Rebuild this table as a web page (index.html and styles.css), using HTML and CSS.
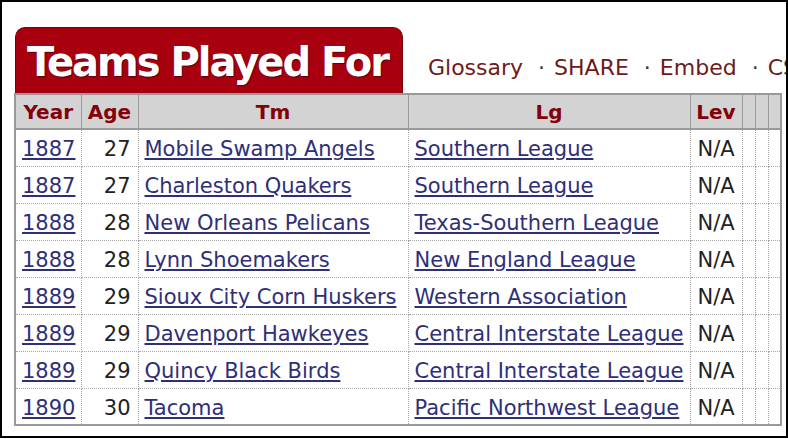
FILE: index.html
```html
<!DOCTYPE html>
<html>
<head>
<meta charset="utf-8">
<link rel="stylesheet" href="styles.css">
</head>
<body>
<div class="frame">
  <div class="content">
    <div class="head">
      <h2 class="tab">Teams Played For</h2>
      <div class="links">
        <span class="lnk">Glossary</span><span class="sep">·</span><span class="lnk">SHARE</span><span class="sep">·</span><span class="lnk">Embed</span><span class="sep">·</span><span class="lnk">CSV</span>
      </div>
    </div>
    <table class="teams">
      <colgroup>
        <col class="c-year"><col class="c-age"><col class="c-tm"><col class="c-lg"><col class="c-lev"><col class="c-x"><col class="c-x"><col class="c-x">
      </colgroup>
      <thead>
        <tr><th>Year</th><th>Age</th><th>Tm</th><th>Lg</th><th>Lev</th><th></th><th></th><th></th></tr>
      </thead>
      <tbody>
        <tr><td class="yr"><a href="#">1887</a></td><td class="age">27</td><td class="tm"><a href="#">Mobile Swamp Angels</a></td><td class="lg"><a href="#">Southern League</a></td><td class="lev">N/A</td><td></td><td></td><td></td></tr>
        <tr><td class="yr"><a href="#">1887</a></td><td class="age">27</td><td class="tm"><a href="#">Charleston Quakers</a></td><td class="lg"><a href="#">Southern League</a></td><td class="lev">N/A</td><td></td><td></td><td></td></tr>
        <tr><td class="yr"><a href="#">1888</a></td><td class="age">28</td><td class="tm"><a href="#">New Orleans Pelicans</a></td><td class="lg"><a href="#">Texas-Southern League</a></td><td class="lev">N/A</td><td></td><td></td><td></td></tr>
        <tr><td class="yr"><a href="#">1888</a></td><td class="age">28</td><td class="tm"><a href="#">Lynn Shoemakers</a></td><td class="lg"><a href="#">New England League</a></td><td class="lev">N/A</td><td></td><td></td><td></td></tr>
        <tr><td class="yr"><a href="#">1889</a></td><td class="age">29</td><td class="tm"><a href="#">Sioux City Corn Huskers</a></td><td class="lg"><a href="#">Western Association</a></td><td class="lev">N/A</td><td></td><td></td><td></td></tr>
        <tr><td class="yr"><a href="#">1889</a></td><td class="age">29</td><td class="tm"><a href="#">Davenport Hawkeyes</a></td><td class="lg"><a href="#">Central Interstate League</a></td><td class="lev">N/A</td><td></td><td></td><td></td></tr>
        <tr><td class="yr"><a href="#">1889</a></td><td class="age">29</td><td class="tm"><a href="#">Quincy Black Birds</a></td><td class="lg"><a href="#">Central Interstate League</a></td><td class="lev">N/A</td><td></td><td></td><td></td></tr>
        <tr><td class="yr"><a href="#">1890</a></td><td class="age">30</td><td class="tm"><a href="#">Tacoma</a></td><td class="lg"><a href="#">Pacific Northwest League</a></td><td class="lev">N/A</td><td></td><td></td><td></td></tr>
      </tbody>
    </table>
  </div>
</div>
</body>
</html>
```

FILE: styles.css
```css
html, body {
  margin: 0;
  padding: 0;
  background: #fff;
}

.frame {
  box-sizing: border-box;
  width: 788px;
  height: 438px;
  border: 2px solid #000;
  overflow: hidden;
  font-family: "DejaVu Sans", Verdana, sans-serif;
}

.content {
  padding: 25px 0 0 12px;
}

.head {
  display: flex;
  align-items: flex-end;
  height: 66px;
}

.tab {
  box-sizing: border-box;
  flex: none;
  margin: 0 0 0 1px;
  width: 388px;
  height: 66px;
  padding: 3px 0 0 11px;
  background: #a8000f;
  border: 1px solid #7a0008;
  border-bottom: none;
  border-radius: 10px 10px 0 0;
  color: #fff;
  font-size: 40px;
  font-weight: bold;
  letter-spacing: -2px;
  line-height: 62px;
  white-space: nowrap;
  text-shadow: 1px 1px 1px #5a0008;
}

.links {
  margin-left: 25px;
  padding-bottom: 13px;
  font-size: 22px;
  line-height: 24px;
  white-space: nowrap;
}

.lnk {
  color: #6e1a1a;
}

.sep {
  color: #333;
  margin: 0 9px 0 15px;
}

.teams {
  border-collapse: collapse;
  table-layout: fixed;
  width: 766px;
  border: 2px solid #999;
  font-size: 21px;
  color: #222;
}

.c-year { width: 66px; }
.c-age { width: 57px; }
.c-tm { width: 270px; }
.c-lg { width: 282px; }
.c-lev { width: 52px; }
.c-x { width: 13px; }

.teams th {
  height: 33px;
  padding: 0;
  background: #d3d3d3;
  border: 1px solid #9a9a9a;
  border-bottom: 2px solid #999;
  color: #850008;
  font-size: 20px;
  font-weight: bold;
  text-align: center;
  white-space: nowrap;
}

.teams td {
  box-sizing: border-box;
  height: 37px;
  padding: 3px 0 0;
  border: 1px dotted #a8a8a8;
  white-space: nowrap;
  overflow: hidden;
}

.teams a {
  color: #2f2f78;
  text-decoration: underline;
}

.yr { padding-left: 6px !important; }
.age { text-align: right; padding-right: 7px !important; }
.tm { padding-left: 6px !important; }
.lg { padding-left: 6px !important; }
.lev { padding-left: 7px !important; }
```
